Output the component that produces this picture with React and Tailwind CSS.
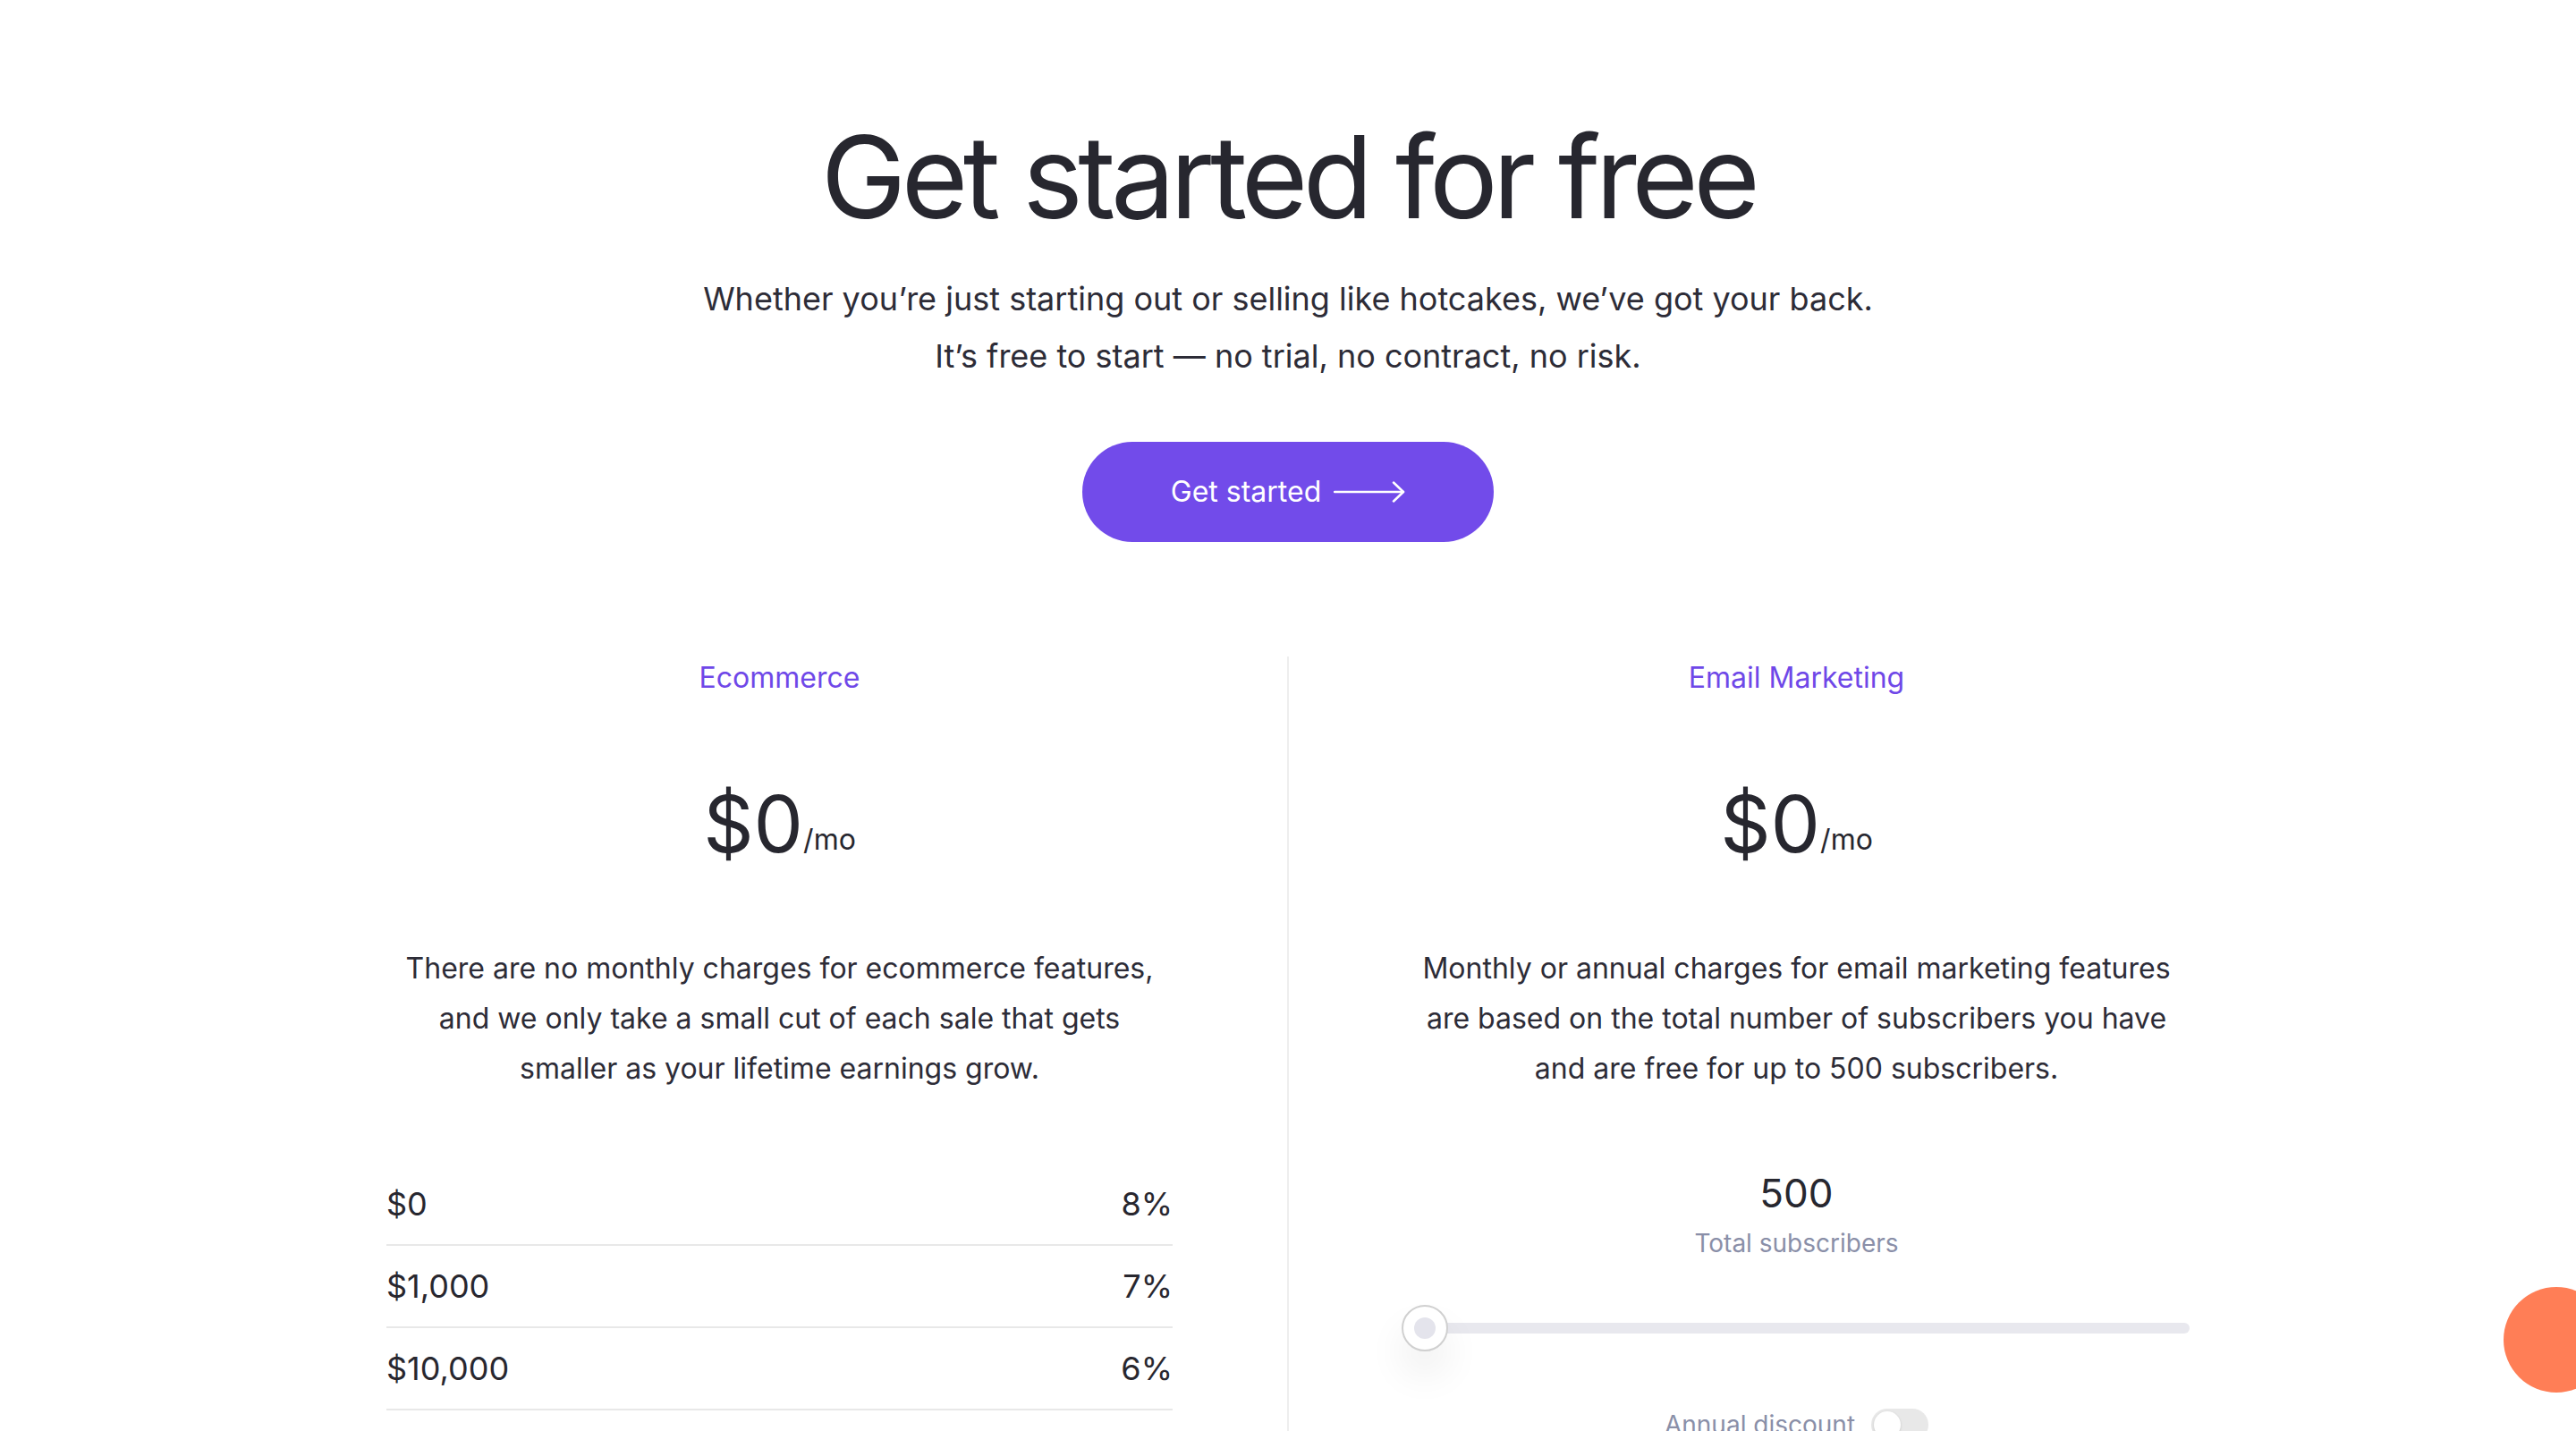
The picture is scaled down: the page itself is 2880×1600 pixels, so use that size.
import React from "react";

function Arrow() {
  return (
    <svg width="80" height="24" viewBox="0 0 80 24" fill="none" stroke="currentColor" strokeWidth="2.5" strokeLinecap="round" strokeLinejoin="round">
      <path d="M1 12 H78" />
      <path d="M67 1.5 L78 12 L67 22.5" />
    </svg>
  );
}

const rows = [
  ["$0", "8%"],
  ["$1,000", "7%"],
  ["$10,000", "6%"],
  ["$100,000", "5%"],
];

export default function App() {
  return (
    <div
      className="relative min-h-screen w-full overflow-hidden bg-white text-[#28272f]"
      style={{ fontFamily: "Inter, 'Noto Sans', sans-serif" }}
    >
      <div className="flex flex-col items-center pt-[134px]">
        <h1 className="text-[128px] leading-[128px] font-normal tracking-[-0.044em] text-[#27272f]">
          Get started for free
        </h1>
        <p className="mt-[40px] text-center text-[36px] leading-[64px] text-[#2d2c37]">
          Whether you’re just starting out or selling like hotcakes, we’ve got your back.
          <br />
          It’s free to start — no trial, no contract, no risk.
        </p>
        <button className="mt-[64px] flex h-[112px] w-[460px] items-center justify-center gap-[14px] rounded-full bg-[#724bea] text-[32px] text-white">
          <span>Get started</span>
          <Arrow />
        </button>

        <div className="mt-[128px] flex w-[2272px]">
          {/* Ecommerce */}
          <div className="flex w-[1135px] flex-col items-center px-[128px]">
            <div className="text-[32px] leading-[48px] text-[#6f48e8]">Ecommerce</div>
            <p className="mt-[95px] text-[88px] leading-[88px] text-[#27272f]">
              $0<span className="relative top-[-3px] text-[32px] leading-none">/mo</span>
            </p>
            <p className="mt-[90px] text-center text-[32px] leading-[56px] text-[#2d2c37]">
              There are no monthly charges for ecommerce features,
              <br />
              and we only take a small cut of each sale that gets
              <br />
              smaller as your lifetime earnings grow.
            </p>
            <div className="mt-[78px] w-full">
              {rows.map(([a, b]) => (
                <div
                  key={a}
                  className="flex h-[92px] items-center justify-between border-b-2 border-[#e8e8e8] text-[36px] text-[#28272f]"
                >
                  <span>{a}</span>
                  <span>{b}</span>
                </div>
              ))}
            </div>
          </div>

          <div className="w-[2px] bg-[#eeeeee]" />

          {/* Email marketing */}
          <div className="flex w-[1135px] flex-col items-center px-[128px]">
            <div className="text-[32px] leading-[48px] text-[#6f48e8]">Email Marketing</div>
            <p className="mt-[95px] text-[88px] leading-[88px] text-[#27272f]">
              $0<span className="relative top-[-3px] text-[32px] leading-none">/mo</span>
            </p>
            <p className="mt-[90px] text-center text-[32px] leading-[56px] text-[#2d2c37]">
              Monthly or annual charges for email marketing features
              <br />
              are based on the total number of subscribers you have
              <br />
              and are free for up to 500 subscribers.
            </p>
            <div className="mt-[89px] text-[44px] leading-[44px] text-[#27272f]">500</div>
            <div className="mt-[13px] text-[28px] leading-[42px] text-[#8a8fa8]">Total subscribers</div>
            <div className="relative mt-[48px] flex h-[52px] w-full items-center">
              <div className="h-[12px] w-full rounded-full bg-[#e8e8ee]" />
              <div className="absolute left-[-2px] top-0 flex h-[52px] w-[52px] items-center justify-center rounded-full border-2 border-[#d0d0d0] bg-white shadow-[0_26px_44px_rgba(0,0,0,0.07)]">
                <div className="h-[24px] w-[24px] rounded-full bg-[#e4e4ec]" />
              </div>
            </div>
            <div className="mt-[64px] flex items-center gap-[18px]">
              <span className="text-[28px] leading-[36px] text-[#8a8fa8]">Annual discount</span>
              <div className="relative h-[36px] w-[64px] rounded-full bg-[#e8e8e8]">
                <div className="absolute left-[3px] top-[3px] h-[30px] w-[30px] rounded-full bg-white shadow-[0_1px_3px_rgba(0,0,0,0.15)]" />
              </div>
            </div>
            <div className="h-[200px]" />
          </div>
        </div>
      </div>

      <div className="fixed bottom-[43px] right-[-37px] h-[118px] w-[118px] rounded-full bg-[#ff7e56]" />
    </div>
  );
}
